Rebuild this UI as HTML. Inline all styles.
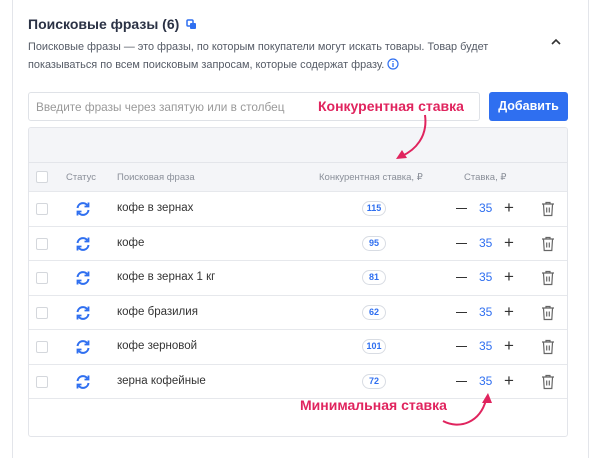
<!DOCTYPE html><html><head><meta charset="utf-8"><style>
*{box-sizing:border-box;margin:0;padding:0}
html,body{width:600px;height:458px;overflow:hidden}
body{background:#fff;font-family:"Liberation Sans",sans-serif;position:relative;color:#333}
.card{position:absolute;left:12px;top:-2px;width:577px;height:462px;border:1px solid #e3e5ea;border-top:none;border-bottom:none}
.a{position:absolute}
.title{left:28px;top:16px;font-size:14px;color:#2b3245;font-weight:600}
.desc{left:28px;top:39px;font-size:10.9px;line-height:17.5px;color:#555b66;width:500px}
.inp{left:28px;top:92px;width:452px;height:29px;border:1px solid #dfe2e7;border-radius:3px;font-size:11.8px;color:#999;padding:7px 7px}
.btn{left:489px;top:92px;width:79px;height:29px;background:#2f6ff0;border-radius:3px;color:#fff;font-size:12.5px;font-weight:600;text-align:center;line-height:29px}
.tbl{left:28px;top:127px;width:540px;height:310px;border:1px solid #e3e5ea;border-radius:3px;overflow:hidden}
.hg{position:absolute;left:0;top:0;width:100%;height:63px;background:#f4f5f8}
.hl{position:absolute;left:0;top:34px;width:100%;border-top:1px solid #e3e5ea}
.h{position:absolute;top:44px;font-size:9.5px;color:#8a8f99}
.row{position:absolute;left:0;width:100%;height:34.5px;border-top:1px solid #e6e8ec}
.cb{position:absolute;left:7px;width:12px;height:12px;border:1px solid #d4d7dc;border-radius:2px;background:#fff}
.row .cb{top:11px}
.ph{position:absolute;left:88px;top:10px;font-size:11.5px;color:#333}
.pill{position:absolute;left:333px;top:9px;width:24px;height:15px;border:1px solid #d8dce3;border-radius:8px;font-size:9px;color:#2f6ff0;text-align:center;line-height:13px;font-weight:bold}
.mn{position:absolute;left:427px;top:16px;width:11px;border-top:1.5px solid #333}
.v{position:absolute;left:450px;top:9px;font-size:12px;color:#2f6ff0}
.pl{position:absolute;left:475px;top:7px;font-size:17px;color:#333;line-height:17px}
.st{position:absolute;left:46px;top:9px}
.tr{position:absolute;left:512px;top:9px}
.red{color:#e0245e;font-weight:bold;font-size:14px}
</style></head><body>
<div class="card"></div>
<div class="a title">Поисковые фразы (6) <svg width="11" height="11" viewBox="0 0 11 11" style="vertical-align:-1px;margin-left:3px"><rect x="1" y="1" width="6" height="6" rx="1" fill="none" stroke="#2f6ff0" stroke-width="1.5"/><rect x="4" y="4" width="6" height="6" rx="1" fill="#2f6ff0"/></svg></div>
<div class="a desc">Поисковые фразы — это фразы, по которым покупатели могут искать товары. Товар будет показываться по всем поисковым запросам, которые содержат фразу. <svg width="12" height="12" viewBox="0 0 12 12" style="vertical-align:-2px"><circle cx="6" cy="6" r="5" fill="none" stroke="#2f6ff0" stroke-width="1.2"/><path d="M6 5v4M6 3v1" stroke="#2f6ff0" stroke-width="1.3"/></svg></div>
<svg class="a" style="left:551px;top:38px" width="10" height="8"><path d="M1 6l4-4 4 4" fill="none" stroke="#333" stroke-width="1.6"/></svg>
<div class="a inp">Введите фразы через запятую или в столбец</div>
<div class="a btn">Добавить</div>
<div class="a tbl">
<div class="hg"></div><div class="hl"></div>
<div class="cb" style="top:43px"></div>
<div class="h" style="left:37px">Статус</div>
<div class="h" style="left:88px">Поисковая фраза</div>
<div class="h" style="left:290px">Конкурентная ставка, ₽</div>
<div class="h" style="left:435px">Ставка, ₽</div>
<div id="rows"></div>
</div>
<div class="a red" style="left:318px;top:98px">Конкурентная ставка</div>
<svg class="a" style="left:390px;top:112px" width="45" height="50"><path d="M35 3 C38 25 25 38 12 44" fill="none" stroke="#e0245e" stroke-width="2"/><path d="M6 47 L17 46 L12 38Z" fill="#e0245e"/></svg>
<div class="a red" style="left:300px;top:397px">Минимальная ставка</div>
<svg class="a" style="left:440px;top:390px" width="55" height="40"><path d="M3 31 C20 40 40 32 46 10" fill="none" stroke="#e0245e" stroke-width="2"/><path d="M48 3 L42 13 L52 13Z" fill="#e0245e"/></svg>
<script>
var d=[["кофе в зернах","115"],["кофе","95"],["кофе в зернах 1 кг","81"],["кофе бразилия","62"],["кофе зерновой","101"],["зерна кофейные","72"]],h="";
d.forEach(function(r,i){h+='<div class="row" style="top:'+(63+i*34.5)+'px"><div class="cb"></div><svg class="st" width="16" height="16" viewBox="0 0 16 16"><path d="M2.5 7A5.5 5.5 0 0 1 12.5 4.5M13.5 9A5.5 5.5 0 0 1 3.5 11.5" fill="none" stroke="#2f6ff0" stroke-width="2"/><path d="M13.5 1.5v4h-4M2.5 14.5v-4h4" fill="none" stroke="#2f6ff0" stroke-width="1.8"/></svg><div class="ph">'+r[0]+'</div><div class="pill">'+r[1]+'</div><div class="mn"></div><div class="v">35</div><div class="pl">+</div><svg class="tr" width="14" height="16" viewBox="0 0 14 16"><path d="M1 3h12M5 3V1.5h4V3M2.5 3.5l.7 11h7.6l.7-11M5.7 6.5v5M8.3 6.5v5" fill="none" stroke="#666" stroke-width="1.2"/></svg></div>'});
h+='<div class="row" style="top:270px"></div>';
document.getElementById("rows").innerHTML=h;
</script>
</body></html>
